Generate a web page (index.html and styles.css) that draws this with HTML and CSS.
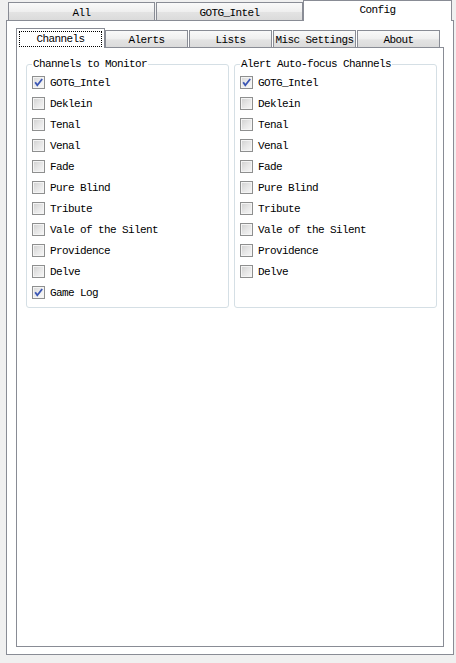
FILE: index.html
```html
<!DOCTYPE html>
<html>
<head>
<meta charset="utf-8">
<link rel="stylesheet" href="styles.css">
</head>
<body>
<div class="window">
  <div class="tabs outer-tabs">
    <div class="tab">All</div>
    <div class="tab">GOTG_Intel</div>
    <div class="tab active">Config</div>
  </div>
  <div class="outer-panel">
    <div class="tabs inner-tabs">
      <div class="tab active"><span class="focus">Channels</span></div>
      <div class="tab">Alerts</div>
      <div class="tab">Lists</div>
      <div class="tab">Misc Settings</div>
      <div class="tab">About</div>
    </div>
    <div class="inner-panel">
      <div class="groups">
        <div class="group">
          <div class="group-title">Channels to Monitor</div>
          <ul class="checks">
            <li class="check"><span class="box checked"><svg viewBox="0 0 11 11" width="11" height="11"><path d="M2.2 5.2 L4.3 8.3 L9.2 2" fill="none" stroke="#3a55b4" stroke-width="1.8"/></svg></span><span>GOTG_Intel</span></li>
            <li class="check"><span class="box"></span><span>Deklein</span></li>
            <li class="check"><span class="box"></span><span>Tenal</span></li>
            <li class="check"><span class="box"></span><span>Venal</span></li>
            <li class="check"><span class="box"></span><span>Fade</span></li>
            <li class="check"><span class="box"></span><span>Pure Blind</span></li>
            <li class="check"><span class="box"></span><span>Tribute</span></li>
            <li class="check"><span class="box"></span><span>Vale of the Silent</span></li>
            <li class="check"><span class="box"></span><span>Providence</span></li>
            <li class="check"><span class="box"></span><span>Delve</span></li>
            <li class="check"><span class="box checked"><svg viewBox="0 0 11 11" width="11" height="11"><path d="M2.2 5.2 L4.3 8.3 L9.2 2" fill="none" stroke="#3a55b4" stroke-width="1.8"/></svg></span><span>Game Log</span></li>
          </ul>
        </div>
        <div class="group">
          <div class="group-title">Alert Auto-focus Channels</div>
          <ul class="checks">
            <li class="check"><span class="box checked"><svg viewBox="0 0 11 11" width="11" height="11"><path d="M2.2 5.2 L4.3 8.3 L9.2 2" fill="none" stroke="#3a55b4" stroke-width="1.8"/></svg></span><span>GOTG_Intel</span></li>
            <li class="check"><span class="box"></span><span>Deklein</span></li>
            <li class="check"><span class="box"></span><span>Tenal</span></li>
            <li class="check"><span class="box"></span><span>Venal</span></li>
            <li class="check"><span class="box"></span><span>Fade</span></li>
            <li class="check"><span class="box"></span><span>Pure Blind</span></li>
            <li class="check"><span class="box"></span><span>Tribute</span></li>
            <li class="check"><span class="box"></span><span>Vale of the Silent</span></li>
            <li class="check"><span class="box"></span><span>Providence</span></li>
            <li class="check"><span class="box"></span><span>Delve</span></li>
          </ul>
        </div>
      </div>
    </div>
  </div>
</div>
</body>
</html>
```
FILE: styles.css
```css
* { box-sizing: border-box; }
body {
  margin: 0;
  background: #f0f0f0;
  font-family: "Liberation Mono", "DejaVu Sans Mono", monospace;
  font-size: 11px;
  letter-spacing: -0.6px;
  color: #000;
}
.window {
  width: 448px;
  margin-left: 6px;
}
.tabs {
  display: flex;
  align-items: flex-end;
}
.tab {
  border: 1px solid #898c95;
  border-bottom: none;
  background: linear-gradient(#f9f9f9 0%, #efefef 50%, #e3e3e3 55%, #dbdbdb 100%);
  display: flex;
  align-items: center;
  justify-content: center;
  line-height: 12px;
  white-space: nowrap;
}
.tab.active {
  background: #fff;
  position: relative;
  z-index: 1;
}
.outer-tabs {
  height: 20px;
  padding-left: 2px;
}
.outer-tabs .tab {
  width: 147px;
  height: 18px;
  margin-right: 1px;
  padding-top: 2px;
}
.outer-tabs .tab.active {
  width: 149px;
  height: 21px;
  margin-left: -1px;
  margin-right: 0;
  margin-bottom: -1px;
  padding-top: 0;
  padding-bottom: 2px;
}
.outer-panel {
  border: 1px solid #898c95;
  background: #fff;
  height: 635px;
  padding: 7px 9px;
}
.inner-tabs {
  height: 19px;
}
.inner-tabs .tab {
  width: 83px;
  height: 17px;
  margin-right: 1px;
  padding-top: 2px;
}
.inner-tabs .tab.active {
  width: 89px;
  height: 20px;
  margin-right: 0;
  margin-bottom: -1px;
  padding: 2px 2px 1px;
}
.focus {
  flex: 1;
  align-self: stretch;
  border: 1px dotted #000;
  display: flex;
  align-items: center;
  justify-content: center;
}
.inner-panel {
  border: 1px solid #898c95;
  background: #fff;
  height: 600px;
}
.groups {
  display: flex;
  gap: 5px;
  padding: 16px 6px 0 9px;
}
.group {
  flex: 0 0 203px;
  border: 1px solid #d5dfe5;
  border-radius: 3px;
  padding: 0 0 4px 5px;
}
.group-title {
  width: fit-content;
  margin-top: -7px;
  padding: 0 1px;
  background: #fff;
  line-height: 12px;
  height: 12px;
  white-space: nowrap;
}
.checks {
  list-style: none;
  margin: 2px 0 0;
  padding: 0;
}
.check {
  height: 21px;
  display: flex;
  align-items: center;
  gap: 5px;
  white-space: nowrap;
}
.box {
  flex: none;
  width: 13px;
  height: 13px;
  border: 1px solid #8e8f8f;
  background: linear-gradient(135deg, #cfcfcf 0%, #e6e6e6 50%, #f7f7f7 100%);
  box-shadow: inset 0 0 0 1px #f4f4f4;
  display: flex;
}
.box.checked {
  background: linear-gradient(135deg, #d6d6d6 0%, #ececec 50%, #fafafa 100%);
}
.box svg {
  display: block;
}
```
